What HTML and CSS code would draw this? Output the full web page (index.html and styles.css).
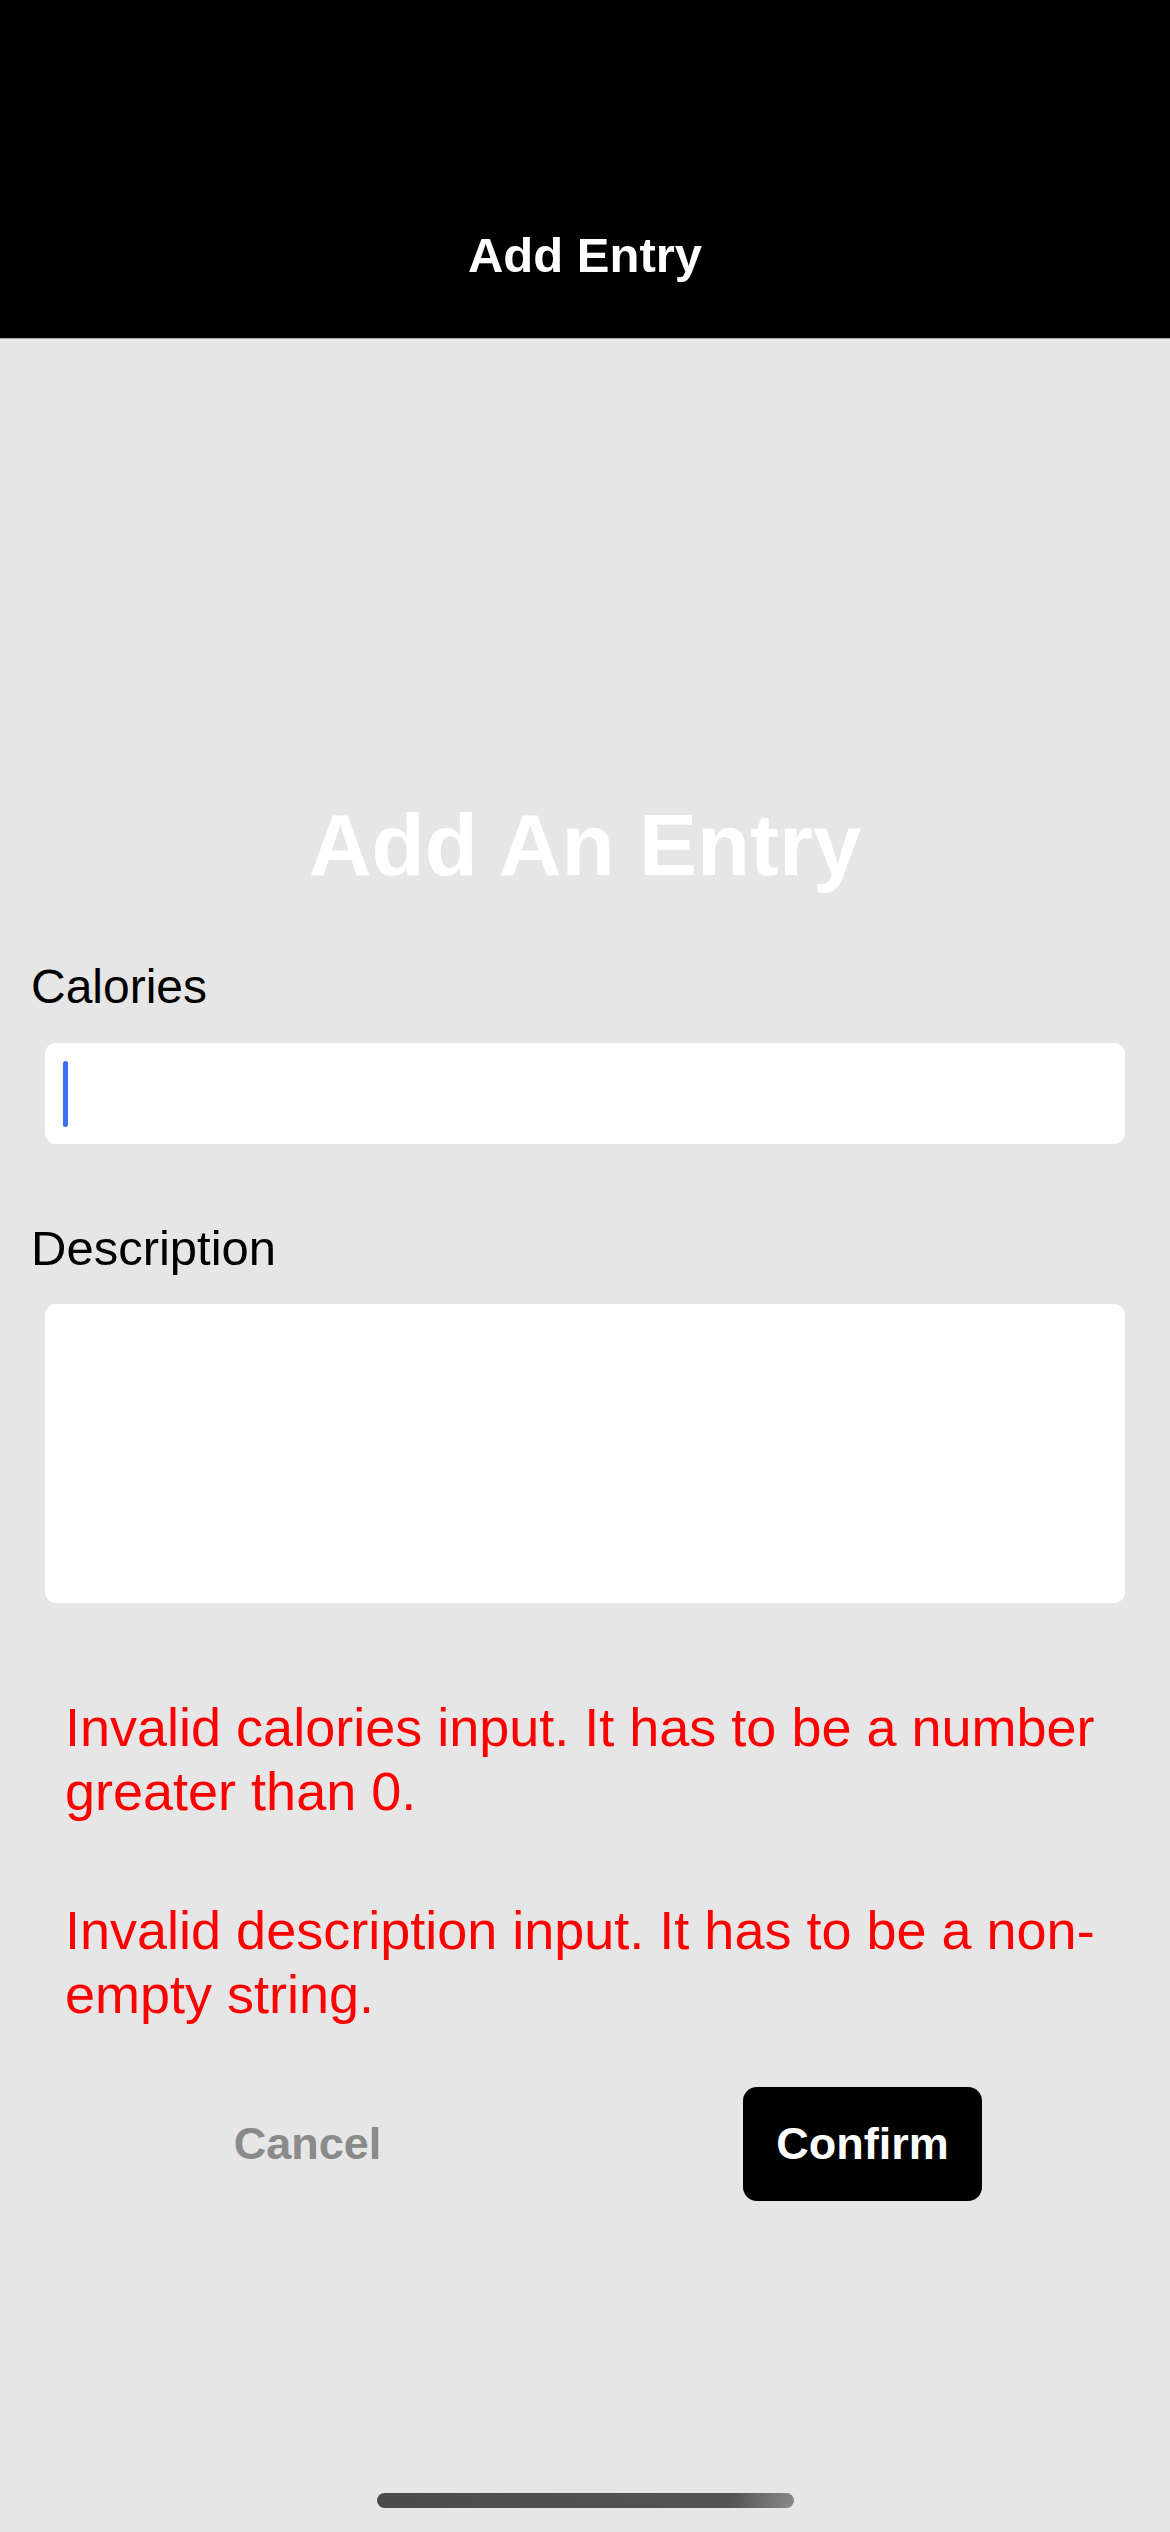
FILE: index.html
```html
<!DOCTYPE html>
<html>
  <head>
    <meta http-equiv="Content-Type" content="text/html; charset=UTF-8" />
    <meta name="viewport" content="width=device-width, initial-scale=1" />
    <title>Add Entry</title>
    <link rel="stylesheet" href="styles.css">
  </head>
  <body>
    <div class="nav-bar">
      <h1 class="nav-title">Add Entry</h1>
    </div>

    <div class="entry-form">
      <h2 class="form-title">Add An Entry</h2>

      <label class="field-label">Calories</label>
      <div class="field field-input">
        <span class="caret"></span>
      </div>

      <label class="field-label field-label-second">Description</label>
      <div class="field field-textarea"></div>

      <div class="errors">
        <p class="error-text">Invalid calories input. It has to be a number greater than 0.</p>
        <p class="error-text">Invalid description input. It has to be a non-empty string.</p>
      </div>

      <div class="form-buttons">
        <div class="button-cell">
          <button class="cancel-button">Cancel</button>
        </div>
        <div class="button-cell">
          <button class="confirm-button">Confirm</button>
        </div>
      </div>
    </div>

    <div class="home-indicator"></div>
  </body>
</html>
```

FILE: styles.css
```css
body {
  font-family: 'Liberation Sans', Arial, sans-serif;
  background-color: #e6e6e6;
  color: #000000;
  margin: 0;
  padding: 0;
  min-height: 2532px;
}
.nav-bar {
  height: 339px;
  box-sizing: border-box;
  padding-top: 225px;
  background-color: #000000;
  border-bottom: 1px solid #a9a9a9;
}
.nav-title {
  margin: 0;
  font-size: 49px;
  line-height: 60px;
  font-weight: bold;
  color: #ffffff;
  text-align: center;
}
.entry-form {
  padding-top: 456px;
}
.form-title {
  margin: 0;
  font-size: 87px;
  line-height: 100px;
  font-weight: bold;
  color: #ffffff;
  text-align: center;
}
.field-label {
  display: block;
  margin: 64px 0 0 31px;
  font-size: 48px;
  line-height: 56px;
}
.field-label-second {
  margin-top: 76px;
  font-size: 49px;
}
.field {
  margin: 28px 45px 0 45px;
  background-color: #ffffff;
  border-radius: 11px;
}
.field-input {
  height: 101px;
  display: flex;
  align-items: center;
  padding-left: 18px;
}
.caret {
  width: 5px;
  height: 66px;
  border-radius: 3px;
  background-color: #3c6ef0;
}
.field-textarea {
  height: 299px;
}
.errors {
  padding: 92px 50px 0 65px;
  display: flex;
  flex-direction: column;
  gap: 75px;
}
.error-text {
  margin: 0;
  font-size: 54px;
  line-height: 64px;
  color: #ff0000;
}
.form-buttons {
  display: flex;
  padding: 61px 30px 0 30px;
}
.button-cell {
  flex: 1;
  display: flex;
  justify-content: center;
}
.cancel-button,
.confirm-button {
  font-family: 'Liberation Sans', Arial, sans-serif;
  font-size: 45px;
  font-weight: bold;
  line-height: 52px;
  border: none;
  height: 114px;
  padding: 0;
}
.cancel-button {
  background: none;
  color: #8a8a8a;
}
.confirm-button {
  width: 239px;
  background-color: #000000;
  color: #ffffff;
  border-radius: 14px;
}
.home-indicator {
  position: absolute;
  left: 377px;
  top: 2493px;
  width: 417px;
  height: 15px;
  border-radius: 8px;
  background: linear-gradient(100deg, #4a4a4a 0%, #555555 85%, #8a8a8a 100%);
}
```
